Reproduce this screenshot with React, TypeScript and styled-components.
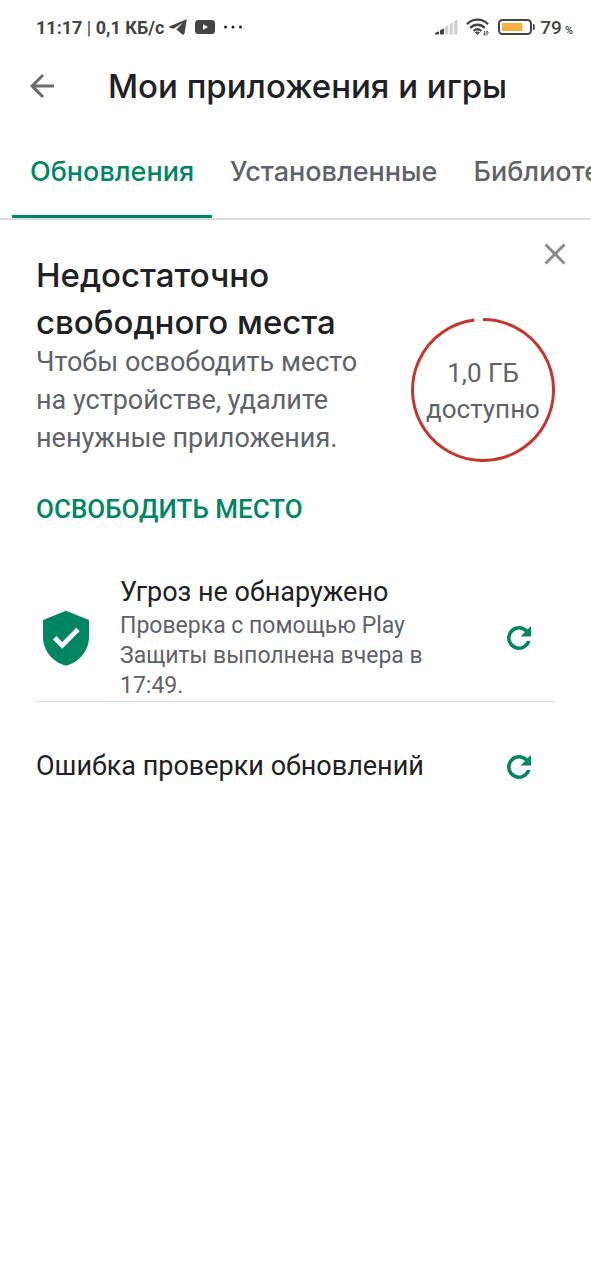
import React from "react";
import styled, { createGlobalStyle } from "styled-components";

const color = {
  green: "#01875f",
  text: "#202124",
  muted: "#5f6368",
  icon: "#6b6b6b",
  status: "#444444",
  line: "#dadce0",
  red: "#c5372c",
  amber: "#f5b041",
};

const display = `"Inter", "Roboto", sans-serif`;

const GlobalStyle = createGlobalStyle`
  *, *::before, *::after { box-sizing: border-box; }
  html, body { margin: 0; background: #fff; }
  body { font-family: "Roboto", sans-serif; color: ${color.text}; }
  h1, h2, h3, p { margin: 0; }
  button { border: 0; padding: 0; background: none; font: inherit; color: inherit; cursor: pointer; }
  svg { display: block; flex: none; }
`;

const Screen = styled.div`
  min-height: 100vh;
  overflow-x: hidden;
  background: #fefefe;
`;

const StatusBar = styled.div`
  display: flex;
  align-items: center;
  justify-content: space-between;
  height: 54px;
  padding: 0 18px 0 36px;
  color: ${color.status};
`;

const StatusGroup = styled.div<{ $gap: number }>`
  display: flex;
  align-items: center;
  gap: ${(p) => p.$gap}px;
`;

const StatusText = styled.span`
  font-size: 18px;
  font-weight: 700;
  white-space: pre;
`;

const Separator = styled.span`
  font-weight: 400;
`;

const BatteryText = styled.span`
  display: flex;
  align-items: baseline;
  gap: 3px;
  font-size: 19px;
  font-weight: 500;
`;

const Percent = styled.span`
  font-size: 11px;
`;

const AppBar = styled.header`
  display: flex;
  align-items: center;
  gap: 48px;
  height: 64px;
  padding: 0 24px;
`;

const Title = styled.h1`
  font-family: ${display};
  font-size: 33px;
  font-weight: 500;
  line-height: 48px;
  white-space: nowrap;
`;

const IconButton = styled.button<{ $color: string }>`
  display: grid;
  place-items: center;
  width: 36px;
  height: 36px;
  flex: none;
  && { color: ${(p) => p.$color}; }
`;

const Tabs = styled.nav`
  display: flex;
  height: 102px;
  padding: 0 12px;
  overflow: hidden;
  border-bottom: 2px solid ${color.line};
`;

const Tab = styled.button<{ $active?: boolean }>`
  flex: none;
  && {
    padding: 10px 18px 0;
    border-bottom: 3px solid ${(p) => (p.$active ? color.green : "transparent")};
    color: ${(p) => (p.$active ? color.green : color.muted)};
    font-family: ${display};
    font-size: 27px;
    font-weight: 500;
  }
`;

const StorageCard = styled.section`
  display: flex;
  justify-content: space-between;
  padding: 16px 18px 0 36px;
`;

const StorageText = styled.div`
  padding-top: 16px;
  min-width: 0;
  max-width: 340px;
`;

const Heading = styled.h2`
  font-family: ${display};
  font-size: 33px;
  font-weight: 500;
  line-height: 47px;
`;

const Body = styled.p`
  && { margin-top: -3px; }
  color: ${color.muted};
  font-size: 27px;
  line-height: 38px;
`;

const TextButton = styled.button`
  && {
    margin-top: 32px;
    color: ${color.green};
    font-size: 26px;
    font-weight: 500;
    line-height: 40px;
    white-space: nowrap;
  }
`;

const StorageSide = styled.div`
  display: flex;
  flex-direction: column;
  align-items: flex-end;
  gap: 46px;
  flex: none;
`;

const Ring = styled.div`
  display: grid;
  place-items: center;
  margin-right: 18px;
  > * { grid-area: 1 / 1; }
`;

const RingLabel = styled.p`
  padding-top: 2px;
  color: ${color.muted};
  font-size: 26px;
  line-height: 36px;
  text-align: center;
`;

const Row = styled.section<{ $divided?: boolean }>`
  display: flex;
  align-items: center;
  margin: 0 36px;
  padding-right: 18px;
  border-bottom: ${(p) => (p.$divided ? `1px solid ${color.line}` : "0")};
`;

const ProtectRow = styled(Row)`
  margin-top: 45px;
  padding-left: 6px;
  gap: 30px;
`;

const ErrorRow = styled(Row)`
  margin-top: 46px;
`;

const RowText = styled.div`
  flex: 1;
  min-width: 0;
`;

const RowTitle = styled.h3`
  font-size: 27px;
  font-weight: 400;
  line-height: 37px;
`;

const RowDetail = styled.p`
  max-width: 320px;
  color: ${color.muted};
  font-size: 23px;
  line-height: 30px;
`;

const Icon = ({ d }: { d: string }) => (
  <svg width="36" height="36" viewBox="0 0 24 24" fill="currentColor" aria-hidden="true">
    <path d={d} />
  </svg>
);

const BACK = "M20 11H7.83l5.59-5.59L12 4l-8 8 8 8 1.41-1.41L7.83 13H20v-2z";
const CLOSE =
  "M19 6.41 17.59 5 12 10.59 6.41 5 5 6.41 10.59 12 5 17.59 6.41 19 12 13.41 17.59 19 19 17.59 13.41 12z";
const REFRESH =
  "M17.65 6.35A7.96 7.96 0 0 0 12 4a8 8 0 1 0 7.75 10h-2.52A5.6 5.6 0 1 1 16 8.08L13 11h7V4l-2.35 2.35z";

const Telegram = () => (
  <svg width="18" height="16" viewBox="0 0 18 16" fill="currentColor" aria-hidden="true">
    <path d="M17.8.2 0 7.6c0 .7.5.9 1.3 1.2l3.2 1L14 3.6 7.4 10.6l6 4.8c1 .6 1.8.4 2.1-.8z" />
  </svg>
);

const Youtube = () => (
  <svg width="20" height="14" viewBox="0 0 20 14" aria-hidden="true">
    <rect width="20" height="14" rx="3.5" fill="currentColor" />
    <path d="M8 4.2v5.6L13 7z" fill="#fff" />
  </svg>
);

const Dots = () => (
  <svg width="20" height="4" viewBox="0 0 20 4" fill="#222" aria-hidden="true">
    <circle cx="2.5" cy="2" r="1.5" />
    <circle cx="10" cy="2" r="1.5" />
    <circle cx="17.5" cy="2" r="1.5" />
  </svg>
);

const Signal = () => (
  <svg width="23" height="16" viewBox="0 0 23 16" aria-hidden="true">
    <path d="M0 15.5v-1.6l4-1.6v3.2zM5 15.5v-4.2l4-2v6.2z" fill={color.status} />
    <path d="M10 15.5V7.8l3.2-1.6v9.3zM14.6 15.5V5l3.2-1.8v12.3zM19.2 15.5V2.2L22.4.4v15.1z" fill="#cfcfcf" />
  </svg>
);

const Wifi = () => (
  <svg width="24" height="18" viewBox="0 0 24 18" fill="none" stroke="currentColor" strokeWidth="2.3" aria-hidden="true">
    <path d="M1 6.2C7 .2 16 .2 22 6.2M4.2 9.8c4.3-4.1 10.3-4.1 14.6 0M7.6 13c2.4-2.1 5.4-2.1 7.8 0" />
    <path d="M8.8 14.4c1.8-1.3 3.6-1.3 5.2 0L11.4 17z" fill="currentColor" stroke="none" />
    <path d="M18.8 13v4.4l-1.4-1.7M21 17.4V13l1.4 1.7" strokeWidth="1" />
  </svg>
);

const Battery = () => (
  <svg width="37" height="16" viewBox="0 0 37 16" aria-hidden="true">
    <rect x="1" y="1" width="32" height="14" rx="3.5" fill="#fff" stroke="currentColor" strokeWidth="2" />
    <rect x="4" y="4" width="20.5" height="8" rx="1" fill={color.amber} />
    <path d="M35 5h.5a1.2 1.2 0 0 1 1.2 1.2v3.6a1.2 1.2 0 0 1-1.2 1.2H35z" fill="currentColor" />
  </svg>
);

const Shield = () => (
  <svg width="48" height="56" viewBox="0 0 48 56" aria-hidden="true">
    <path d="M24 .8 47 10v17c0 13.5-9.8 25.4-23 28.7C10.8 52.4 1 40.5 1 27V10z" fill={color.green} />
    <path d="m12.6 27.8 7.6 7.6L36 19.4" fill="none" stroke="#fff" strokeWidth="4.8" />
  </svg>
);

const StorageRing = () => (
  <svg width="144" height="144" viewBox="0 0 144 144" fill="none" aria-hidden="true">
    <path d="M72 1.5A70.5 70.5 0 1 1 63.4 2.03" stroke={color.red} strokeWidth="3" />
  </svg>
);

export default function App() {
  return (
    <Screen>
      <GlobalStyle />
      <StatusBar>
        <StatusGroup $gap={5}>
          <StatusText>
            11:17 <Separator>|</Separator> 0,1 КБ/с
          </StatusText>
          <StatusGroup $gap={8}>
            <Telegram />
            <Youtube />
            <Dots />
          </StatusGroup>
        </StatusGroup>
        <StatusGroup $gap={5}>
          <StatusGroup $gap={8}>
            <Signal />
            <Wifi />
            <Battery />
          </StatusGroup>
          <BatteryText>
            79 <Percent>%</Percent>
          </BatteryText>
        </StatusGroup>
      </StatusBar>
      <AppBar>
        <IconButton $color={color.icon} aria-label="Назад">
          <Icon d={BACK} />
        </IconButton>
        <Title>Мои приложения и игры</Title>
      </AppBar>
      <Tabs>
        <Tab $active>Обновления</Tab>
        <Tab>Установленные</Tab>
        <Tab>Библиотека</Tab>
      </Tabs>
      <main>
        <StorageCard>
          <StorageText>
            <Heading>Недостаточно свободного места</Heading>
            <Body>Чтобы освободить место на устройстве, удалите ненужные приложения.</Body>
            <TextButton>ОСВОБОДИТЬ МЕСТО</TextButton>
          </StorageText>
          <StorageSide>
            <IconButton $color="#8a8a8a" aria-label="Закрыть">
              <Icon d={CLOSE} />
            </IconButton>
            <Ring>
              <StorageRing />
              <RingLabel>
                1,0 ГБ
                <br />
                доступно
              </RingLabel>
            </Ring>
          </StorageSide>
        </StorageCard>
        <ProtectRow $divided>
          <Shield />
          <RowText>
            <RowTitle>Угроз не обнаружено</RowTitle>
            <RowDetail>Проверка с помощью Play Защиты выполнена вчера в 17:49.</RowDetail>
          </RowText>
          <IconButton $color={color.green} aria-label="Проверить ещё раз">
            <Icon d={REFRESH} />
          </IconButton>
        </ProtectRow>
        <ErrorRow>
          <RowText>
            <RowTitle>Ошибка проверки обновлений</RowTitle>
          </RowText>
          <IconButton $color={color.green} aria-label="Повторить">
            <Icon d={REFRESH} />
          </IconButton>
        </ErrorRow>
      </main>
    </Screen>
  );
}
